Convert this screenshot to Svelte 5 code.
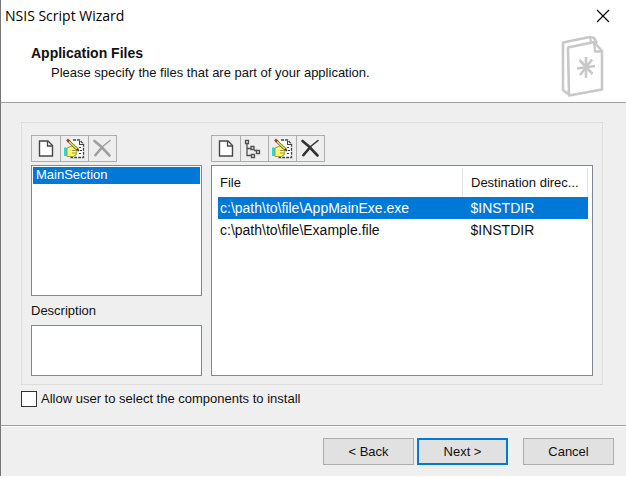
<script>
  const files = [
    { path: 'c:\\path\\to\\file\\AppMainExe.exe', dest: '$INSTDIR' },
    { path: 'c:\\path\\to\\file\\Example.file', dest: '$INSTDIR' }
  ];
  let selected = $state(0);
  let section = $state('MainSection');
  let description = $state('');
  let allowSelect = $state(false);
</script>

{#snippet newIcon()}
  <svg width="28" height="26" viewBox="0 0 28 26" aria-hidden="true">
    <path d="M7.500 5h8.500l4.500 4.500v10.500h-13v-15z" fill="#fff" stroke="#484848" stroke-width="1.400" />
    <path d="M15.500 5v5h5" fill="none" stroke="#484848" stroke-width="1.300" />
  </svg>
{/snippet}

{#snippet treeIcon()}
  <svg width="28" height="26" viewBox="0 0 28 26" aria-hidden="true" fill="none" stroke="#505050" stroke-width="1.300">
    <path d="M6 7v12.500h5M6 12.500h4M13 14.500h3" />
    <path d="M4.500 4.500h3v3h-3zM10 10.500h3v3h-3zM15.500 14.500h3v3h-3zM10.500 18.500h3v3h-3z" fill="#eee" />
  </svg>
{/snippet}

{#snippet editIcon()}
  <svg width="28" height="26" viewBox="0 0 28 26" aria-hidden="true">
    <path d="M10 4h9l4 4v14h-13z" fill="#fff" />
    <path d="M12 4h6.500l4 4v13.500h-13" fill="none" stroke="#444" stroke-width="1.300" stroke-dasharray="3 1" />
    <path d="M18.500 4.500v4h4M18 11.500h2M19 14.500h2M18 17.500h2" fill="none" stroke="#444" stroke-width="1.100" />
    <path d="M3 11.500h3v8.500H3z" fill="#28d8df" />
    <path d="M6 12l5-2 2 2h3v3l-1 4-3 1.500H6z" fill="#fff36c" stroke="#a59d42" />
    <path d="M11 14.500h4.500M11 17h4" stroke="#a59d42" />
    <path d="M7 4.500l10 9.500" stroke="#66622d" stroke-width="2.800" />
    <path d="M8 5.500l8 7.500" stroke="#f0dc52" stroke-width="1.500" />
    <path d="M6 3.500l2 2" stroke="#a53a32" stroke-width="2.500" />
    <path d="M16 13l2 2" stroke="#333" stroke-width="1.500" />
  </svg>
{/snippet}

{#snippet deleteIcon()}
  <svg width="28" height="26" viewBox="0 0 28 26" aria-hidden="true" fill="none" stroke="currentColor" stroke-linecap="round">
    <path d="M5.500 5l6.500 5.500 8.500 9" stroke-width="2.600" />
    <path d="M21 4.500l-8 6.500-7 8.500" stroke-width="1.600" />
    <path d="M13 11.500L6.500 19" stroke-width="2.600" />
  </svg>
{/snippet}

<div class="window">
  <header class="titlebar">
    <span>NSIS Script Wizard</span>
    <button class="close" aria-label="Close">
      <svg width="14" height="14" viewBox="0 0 14 14"><path d="M1 1l12 12M13 1L1 13" stroke="#000" stroke-width="1.200" /></svg>
    </button>
  </header>

  <section class="banner">
    <div>
      <h1>Application Files</h1>
      <p>Please specify the files that are part of your application.</p>
    </div>
    <svg width="44" height="64" viewBox="0 0 44 64" aria-hidden="true" fill="none" stroke="#c8c8c8" stroke-width="2.600" stroke-linejoin="round">
      <path d="M7 60l-5-4V8.500L24 4l5-1 4 1 3 5" />
      <path d="M7 13.500L33 8l8 9v38.500L8 61.500z" fill="#fff" />
      <path d="M33 8l1 9.500h7" stroke-width="2.300" />
      <path d="M29 3l1 5" stroke-width="2" />
      <path d="M25 23v21M16 34.500l18-2.500M18.500 26l13 14M31 25.500L19 41" stroke-width="2.600" />
    </svg>
  </section>

  <main>
    <div class="group">
      <div class="sections">
        <div class="toolbar">
          <button aria-label="New section">{@render newIcon()}</button>
          <button aria-label="Edit section">{@render editIcon()}</button>
          <button aria-label="Delete section" disabled>{@render deleteIcon()}</button>
        </div>
        <select size="2" bind:value={section} aria-label="Sections">
          <option>MainSection</option>
        </select>
        <label class="caption" for="description">Description</label>
        <textarea id="description" bind:value={description}></textarea>
      </div>

      <div class="files">
        <div class="toolbar">
          <button aria-label="Add file">{@render newIcon()}</button>
          <button aria-label="Add directory tree">{@render treeIcon()}</button>
          <button aria-label="Edit file">{@render editIcon()}</button>
          <button aria-label="Delete file">{@render deleteIcon()}</button>
        </div>
        <div class="list">
          <table>
            <thead>
              <tr><th>File</th><th class="dest">Destination direc...</th></tr>
            </thead>
            <tbody>
              {#each files as file, i}
                <tr class:selected={selected === i} onclick={() => (selected = i)}>
                  <td>{file.path}</td>
                  <td>{file.dest}</td>
                </tr>
              {/each}
            </tbody>
          </table>
        </div>
      </div>
    </div>

    <label class="check">
      <input type="checkbox" bind:checked={allowSelect} />
      Allow user to select the components to install
    </label>
  </main>

  <footer>
    <button>&lt; Back</button>
    <button class="default">Next &gt;</button>
    <button class="cancel">Cancel</button>
  </footer>
</div>

<style>
  :global(body) {
    background: #fff;
  }

  .window,
  .window * {
    box-sizing: border-box;
  }

  .window {
    border-left: 1px solid #777;
    background: #efefef;
    color: #111;
    font: 13px/20px "Liberation Sans", Arial, sans-serif;
  }

  button,
  select,
  textarea {
    font: inherit;
    color: inherit;
  }

  button {
    padding: 0;
    border-radius: 0;
  }

  svg {
    display: block;
  }

  .titlebar {
    display: flex;
    justify-content: space-between;
    align-items: center;
    height: 32px;
    padding: 0 15px 0 4px;
    background: #fff;
    color: #000;
    font: 14px/20px "Open Sans", "Noto Sans", sans-serif;
  }

  .close {
    border: 0;
    background: none;
    padding: 1px;
  }

  .banner {
    display: flex;
    justify-content: space-between;
    height: 71px;
    padding: 2px 21px 0 30px;
    background: #fff;
    border-bottom: 1px solid #a0a0a0;
  }

  h1 {
    margin: 9px 0 0;
    font-size: 14px;
    line-height: 20px;
  }

  p {
    margin: 0 0 0 20px;
  }

  main {
    padding: 19px 23px 16px 20px;
  }

  .group {
    display: flex;
    gap: 9px;
    padding: 12px 9px 8px;
    border: 1px solid #dcdcdc;
  }

  .sections {
    display: flex;
    flex-direction: column;
    flex: 0 0 171px;
    min-width: 0;
  }

  .files {
    display: flex;
    flex-direction: column;
    flex: 1;
    min-width: 0;
  }

  .toolbar {
    display: flex;
    align-self: flex-start;
    margin-bottom: 3px;
    border: 1px solid #adadad;
  }

  .toolbar button {
    width: 28px;
    height: 25px;
    overflow: hidden;
    border: 0;
    background: #eee;
    color: #333;
  }

  .toolbar button + button {
    border-left: 1px solid #adadad;
  }

  .toolbar button:disabled {
    color: #a0a0a0;
  }

  select,
  textarea,
  .list {
    border: 1px solid #828790;
    border-radius: 0;
    background: #fff;
  }

  select {
    height: 131px;
    padding: 1px;
    outline: 0;
    overflow: hidden;
  }

  option {
    min-height: 17px;
    padding: 0 3px;
    line-height: 17px;
  }

  option:checked {
    background: #0078d7 linear-gradient(#0078d7, #0078d7);
    color: #fff;
  }

  .caption {
    padding: 5px 0 4px;
  }

  textarea {
    height: 51px;
    resize: none;
  }

  .list {
    flex: 1;
    padding: 2px 4px 0 6px;
  }

  table {
    width: 100%;
    table-layout: fixed;
    border-collapse: collapse;
  }

  th,
  td {
    padding: 0 2px;
    text-align: left;
    font-weight: normal;
    white-space: nowrap;
  }

  th {
    height: 29px;
    border-right: 1px solid #e5e5e5;
  }

  td {
    height: 22px;
    font-size: 14px;
  }

  th:last-child,
  td:last-child {
    padding-left: 8px;
  }

  .dest {
    width: 125px;
  }

  .selected {
    background: #0078d7;
    color: #fff;
  }

  .check {
    display: flex;
    align-items: center;
    gap: 4px;
    width: fit-content;
    margin-top: 4px;
  }

  input {
    appearance: none;
    width: 16px;
    height: 16px;
    margin: 0;
    border: 1px solid #333;
    background: #fff;
  }

  input:checked {
    background: #0078d7;
  }

  footer {
    display: flex;
    justify-content: flex-end;
    gap: 3px;
    padding: 12px 12px 11px;
    border-top: 1px solid #a0a0a0;
    box-shadow: inset 0 1px #fff;
  }

  footer button {
    width: 91px;
    height: 27px;
    border: 1px solid #adadad;
    background: #e1e1e1;
  }

  footer .default {
    border: 2px solid #0078d7;
  }

  footer .cancel {
    margin-left: 12px;
  }
</style>
